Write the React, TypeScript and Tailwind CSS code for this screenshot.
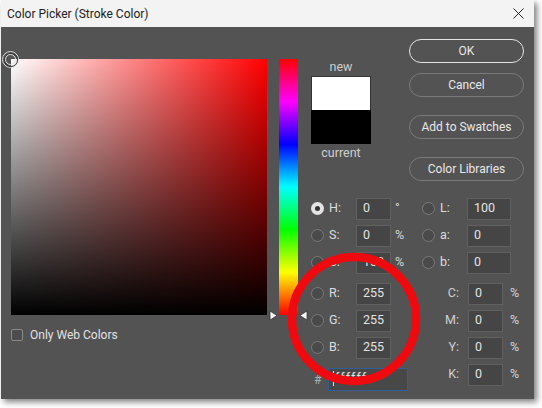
import React from 'react';

const font = { fontFamily: 'Roboto, "Open Sans", sans-serif' };

const Radio = ({ on }: { on?: boolean }) => (
  <span
    className={`flex h-[13px] w-[13px] shrink-0 items-center justify-center rounded-full ${
      on ? 'bg-[#e4e4e4]' : 'border border-[#7a7a7a] bg-[#4a4a4a]'
    }`}
  >
    {on && <span className="h-[5px] w-[5px] rounded-full bg-[#333333]" />}
  </span>
);

const Box = ({ value, w = 'w-[35px]' }: { value: string; w?: string }) => (
  <div className={`flex h-[22px] ${w} items-center border border-[#606060] bg-[#454545] pl-[6px] text-[12.5px] text-[#e2e2e2]`}>
    {value}
  </div>
);

// one row of the left or top right group, radio + label + box + unit
const Field = ({ label, value, unit, on, w }: { label: string; value: string; unit?: string; on?: boolean; w?: string }) => (
  <div className="flex h-[27px] items-center">
    <Radio on={on} />
    <span className="ml-[5px] w-[27px] shrink-0 text-[12.5px] text-[#dddddd]">{label}</span>
    <Box value={value} w={w} />
    {unit && <span className="ml-[4px] text-[12.5px] text-[#d4d4d4]">{unit}</span>}
  </div>
);

const CmykField = ({ label, value }: { label: string; value: string }) => (
  <div className="flex h-[27px] items-center">
    <span className="w-[38px] pr-[1px] text-right text-[12.5px] text-[#d0d0d0]">{label}</span>
    <div className="ml-[8px]">
      <Box value={value} w="w-[35px]" />
    </div>
    <span className="ml-[7px] text-[12.5px] text-[#d4d4d4]">%</span>
  </div>
);

const DialogButton = ({ label, primary, className }: { label: string; primary?: boolean; className?: string }) => (
  <div
    className={`flex h-[24px] w-[115px] items-center justify-center rounded-full border text-[12px] text-[#e8e8e8] ${
      primary ? 'border-[#e4e4e4]' : 'border-[#7a7a7a]'
    } ${className ?? ''}`}
  >
    {label}
  </div>
);

export default function App() {
  return (
    <div className="h-[408px] w-[542px] overflow-hidden bg-white" style={font}>
      <div className="relative ml-[1px] flex h-[399px] w-[533px] flex-col shadow-[3px_3px_6px_rgba(0,0,0,0.5)]">
        {/* Title bar */}
        <div className="flex h-[27px] shrink-0 items-center justify-between bg-[#f3f3f3] pl-[6px] pr-[10px] text-[12px] text-[#222222]">
          <span>Color Picker (Stroke Color)</span>
          <svg width="11" height="11" viewBox="0 0 11 11">
            <path d="M0.5 0.5 L10.5 10.5 M10.5 0.5 L0.5 10.5" stroke="#222222" strokeWidth="1" />
          </svg>
        </div>

        {/* Body */}
        <div className="relative flex flex-1 bg-[#535353] pl-[10px]">
          {/* Colour field */}
          <div className="w-[256px] shrink-0 pt-[32px]">
            <div className="relative h-[256px] w-[256px] bg-[linear-gradient(to_top,#000,transparent),linear-gradient(to_right,#fff,#f00)]">
              <span className="absolute left-[-9px] top-[-8px] flex h-[17px] w-[17px] items-center justify-center rounded-full border border-[#d8d8d8]">
                <span className="flex h-[14px] w-[14px] items-center justify-center rounded-full border border-[#333333]">
                  <span className="h-[11px] w-[11px] rounded-full border border-[#e0e0e0]" />
                </span>
              </span>
            </div>
            <div className="mt-[11px] flex items-center">
              <span className="h-[12px] w-[12px] rounded-[2px] border border-[#8a8a8a] bg-[#4c4c4c]" />
              <span className="ml-[7px] text-[12px] text-[#e2e2e2]">Only Web Colors</span>
            </div>
          </div>

          {/* Hue bar */}
          <div className="ml-[12px] w-[19px] shrink-0 pt-[32px]">
            <div className="relative h-[256px] w-[19px] bg-[linear-gradient(to_bottom,#f00,#f0f,#00f,#0ff,#0f0,#ff0,#f00)]">
              <svg width="9" height="11" viewBox="0 0 9 11" className="absolute left-[-10px] top-[251px]">
                <path d="M1 1 L8 5.5 L1 10 Z" fill="#ffffff" stroke="#333333" strokeWidth="0.8" />
              </svg>
              <svg width="9" height="11" viewBox="0 0 9 11" className="absolute right-[-10px] top-[251px]">
                <path d="M8 1 L1 5.5 L8 10 Z" fill="#ffffff" stroke="#333333" strokeWidth="0.8" />
              </svg>
            </div>
          </div>

          {/* Right column */}
          <div className="ml-[13px] flex w-[214px] shrink-0 flex-col pt-[12px]">
            <div className="flex h-[156px] shrink-0">
              <div className="flex w-[60px] flex-col items-center pt-[21px]">
                <span className="text-[12.5px] leading-[13px] text-[#cfcfcf]">new</span>
                <div className="mt-[3px] h-[34px] w-[60px] border-x border-t border-[#333333] bg-white" />
                <div className="h-[34px] w-[60px] bg-black" />
                <span className="mt-[1px] text-[12.5px] leading-[16px] text-[#cfcfcf]">current</span>
              </div>
              <div className="ml-[38px] flex flex-col">
                <DialogButton label="OK" primary />
                <DialogButton label="Cancel" className="mt-[10px]" />
                <DialogButton label="Add to Swatches" className="mt-[18px]" />
                <DialogButton label="Color Libraries" className="mt-[18px]" />
              </div>
            </div>

            <div className="flex">
              <div className="w-[111px] shrink-0">
                <Field label="H:" value="0" unit="°" on />
                <Field label="S:" value="0" unit="%" />
                <Field label="B:" value="100" unit="%" />
                <div className="h-[4px]" />
                <Field label="R:" value="255" />
                <Field label="G:" value="255" />
                <Field label="B:" value="255" />
                <div className="mt-[7px] flex h-[23px] items-center">
                  <span className="ml-[3px] w-[14px] text-[12px] text-[#b0b0b0]">#</span>
                  <div className="flex h-[23px] w-[80px] items-center border border-[#2f5f94] bg-[#484848] pb-[2px] pl-[4px] text-[12.5px] tracking-[1px] text-[#e2e2e2]">
                    <span className="mr-[1px] h-[15px] w-px bg-[#dddddd]" />
                    ffffff
                  </div>
                </div>
              </div>
              <div className="flex flex-col">
                <Field label="L:" value="100" w="w-[44px]" />
                <Field label="a:" value="0" w="w-[44px]" />
                <Field label="b:" value="0" w="w-[44px]" />
                <div className="h-[4px]" />
                <CmykField label="C:" value="0" />
                <CmykField label="M:" value="0" />
                <CmykField label="Y:" value="0" />
                <CmykField label="K:" value="0" />
              </div>
            </div>
          </div>
        </div>

        {/* Red circle drawn over the dialog */}
        <svg width="136" height="136" viewBox="0 0 136 136" className="pointer-events-none absolute left-[285px] top-[251px]">
          <circle cx="68" cy="68" r="62" fill="none" stroke="#ee0a0f" strokeWidth="8.5" />
        </svg>
      </div>
    </div>
  );
}
